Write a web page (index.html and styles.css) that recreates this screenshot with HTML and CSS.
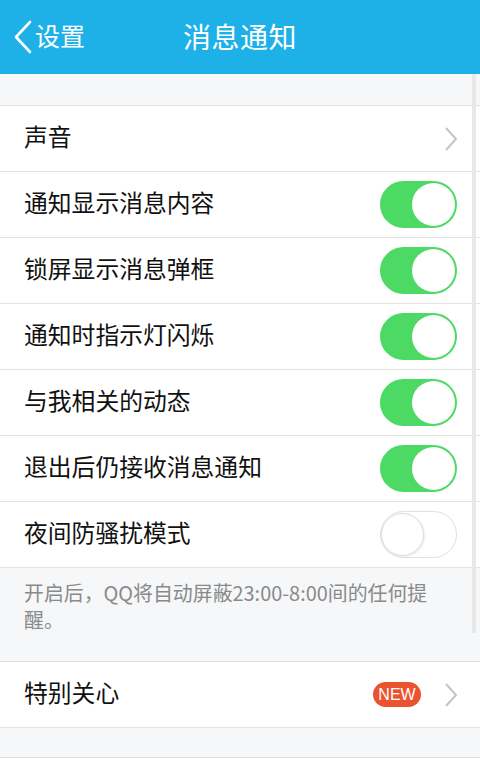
FILE: index.html
```html
<!DOCTYPE html>
<html lang="zh-CN">
<head>
<meta charset="utf-8">
<link rel="stylesheet" href="styles.css">
</head>
<body>
<div class="page">
  <header class="header">
    <div class="back">
      <svg class="back-icon" width="22" height="34" viewBox="0 0 22 34"><path d="M18 2 L4 17 L18 32" fill="none" stroke="#fff" stroke-width="2.6" stroke-linecap="round" stroke-linejoin="round"/></svg>
      <span class="back-text">设置</span>
    </div>
    <div class="title">消息通知</div>
  </header>
  <div class="gap"></div>
  <div class="group">
    <div class="row"><span class="label">声音</span><svg class="chev" width="14" height="26" viewBox="0 0 14 26"><path d="M2 2 L12 13 L2 24" fill="none" stroke="#c4c4c8" stroke-width="2"/></svg></div>
    <div class="row"><span class="label">通知显示消息内容</span><span class="toggle on"><span class="knob"></span></span></div>
    <div class="row"><span class="label">锁屏显示消息弹框</span><span class="toggle on"><span class="knob"></span></span></div>
    <div class="row"><span class="label">通知时指示灯闪烁</span><span class="toggle on"><span class="knob"></span></span></div>
    <div class="row"><span class="label">与我相关的动态</span><span class="toggle on"><span class="knob"></span></span></div>
    <div class="row"><span class="label">退出后仍接收消息通知</span><span class="toggle on"><span class="knob"></span></span></div>
    <div class="row"><span class="label">夜间防骚扰模式</span><span class="toggle off"><span class="knob"></span></span></div>
  </div>
  <div class="note">开启后，QQ将自动屏蔽23:00-8:00间的任何提醒。</div>
  <div class="group">
    <div class="row"><span class="label">特别关心</span><span class="right"><span class="badge">NEW</span><svg class="chev" width="14" height="26" viewBox="0 0 14 26"><path d="M2 2 L12 13 L2 24" fill="none" stroke="#c4c4c8" stroke-width="2"/></svg></span></div>
  </div>
  <div class="gap2"></div>
  <div class="bottom"></div>
  <div class="scrollbar"></div>
</div>
</body>
</html>
```
FILE: styles.css
```css
* { box-sizing: border-box; }
html, body { margin: 0; padding: 0; }
body {
  width: 480px;
  height: 762px;
  overflow: hidden;
  background: #f6f7f8;
  font-family: "Noto Sans CJK SC", "Noto Sans", sans-serif;
  color: #111;
}
.page { position: relative; height: 762px; }
.header {
  height: 74px;
  background: #1db1e8;
  display: flex;
  align-items: center;
  position: relative;
  color: #fff;
}
.back {
  display: flex;
  align-items: center;
  padding-left: 12px;
  height: 100%;
}
.back-icon { display: block; margin-right: 1px; }
.back-text { font-size: 25px; line-height: 1; padding-bottom: 4px; }
.title {
  position: absolute;
  left: 183px;
  top: 0;
  height: 74px;
  display: flex;
  align-items: center;
  font-size: 28px;
  letter-spacing: 0.5px;
  padding-bottom: 3px;
}
.gap { height: 31px; }
.group {
  background: #fff;
  border-top: 1px solid #e2e2e2;
}
.row {
  height: 66px;
  border-bottom: 1px solid #e2e2e2;
  display: flex;
  align-items: center;
  justify-content: space-between;
  padding: 0 23px 0 24px;
}
.label { font-size: 23.8px; line-height: 1; padding-bottom: 6px; }
.chev { display: block; margin-right: -1px; }
.right { display: flex; align-items: center; }
.badge {
  background: #e9532f;
  color: #fff;
  font-family: "Liberation Sans", Arial, sans-serif;
  font-size: 16px;
  width: 48px;
  height: 25px;
  border-radius: 12.5px;
  display: flex;
  align-items: center;
  justify-content: center;
  margin-right: 23px;
}
.toggle {
  width: 77px;
  height: 47px;
  border-radius: 24px;
  position: relative;
  display: block;
}
.toggle.on { background: #4cd964; }
.toggle.off { background: #fff; border: 1.5px solid #e0e0e0; }
.knob {
  position: absolute;
  width: 43px;
  height: 43px;
  border-radius: 50%;
  background: #fff;
  top: 2px;
}
.toggle.on .knob { right: 2px; }
.toggle.off .knob {
  left: 0;
  top: 0.5px;
  width: 43px;
  height: 43px;
  border: 1.5px solid #dcdcdc;
  box-shadow: 1px 1px 2px rgba(0,0,0,0.08);
}
.note {
  height: 93px;
  padding: 11px 36px 0 24px;
  font-size: 19.9px;
  line-height: 27px;
  color: #8a8a8a;
}
.gap2 { height: 29px; }
.bottom { border-top: 1px solid #e2e2e2; background: #fff; height: 10px; }
.scrollbar {
  position: absolute;
  right: 4px;
  top: 74px;
  width: 4px;
  height: 559px;
  background: #e8e8e8;
}
```
